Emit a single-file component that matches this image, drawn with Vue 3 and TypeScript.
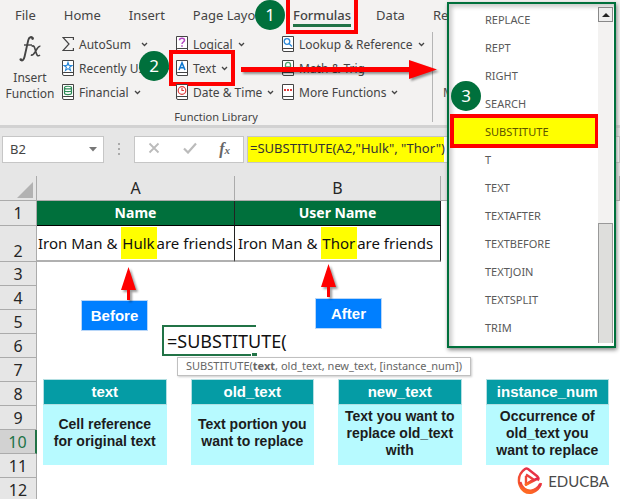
<script setup lang="ts">
import { ref } from 'vue'

interface Tab { label: string; active?: boolean }
interface Command { label: string; icon: string; menu: boolean; boxed?: boolean; wide?: boolean }
interface Card { title: string; lines: string[] }

const tabs: Tab[] = [
  { label: 'File' },
  { label: 'Home' },
  { label: 'Insert' },
  { label: 'Page Layout' },
  { label: 'Formulas', active: true },
  { label: 'Data' },
  { label: 'Review' },
]

const columns: Command[][] = [
  [
    { label: 'AutoSum', icon: 'sum', menu: true, wide: true },
    { label: 'Recently Used', icon: 'star', menu: true },
    { label: 'Financial', icon: 'coins', menu: true },
  ],
  [
    { label: 'Logical', icon: 'question', menu: true },
    { label: 'Text', icon: 'letter', menu: true, boxed: true },
    { label: 'Date & Time', icon: 'clock', menu: true },
  ],
  [
    { label: 'Lookup & Reference', icon: 'search', menu: true },
    { label: 'Math & Trig', icon: 'theta', menu: false },
    { label: 'More Functions', icon: 'dots', menu: true },
  ],
]

const functions: string[] = [
  'REPLACE', 'REPT', 'RIGHT', 'SEARCH', 'SUBSTITUTE', 'T',
  'TEXT', 'TEXTAFTER', 'TEXTBEFORE', 'TEXTJOIN', 'TEXTSPLIT', 'TRIM',
]

const emptyRows: number[] = [3, 4, 5, 6, 7, 8, 9, 10, 11, 12]

const cards: Card[] = [
  { title: 'text', lines: ['Cell reference', 'for original text'] },
  { title: 'old_text', lines: ['Text portion you', 'want to replace'] },
  { title: 'new_text', lines: ['Text you want to', 'replace old_text', 'with'] },
  { title: 'instance_num', lines: ['Occurrence of', 'old_text you', 'want to replace'] },
]

const formula = ref('=SUBSTITUTE(A2,"Hulk", "Thor")')
const selected = ref('SUBSTITUTE')
</script>

<template>
  <main class="page">
    <header class="ribbon">
      <nav class="tabs">
        <a v-for="t in tabs" :key="t.label" href="#" class="tab" :class="{ active: t.active }">{{ t.label }}</a>
      </nav>
      <div class="groups">
        <section class="group library">
          <div class="group-body">
            <button class="insert-fn" type="button">
              <svg class="fx-big" viewBox="0 0 24 28" aria-hidden="true">
                <path d="M14.800 3.200C13.800 1.300 11 1.800 10.200 5.400L6.600 21.500C6 24.600 4 26.600 2.800 24.800" fill="none" stroke="#444" stroke-width="1.900" />
                <circle cx="14.600" cy="3.600" r="1.300" fill="#444" /><circle cx="2.800" cy="24.600" r="1.300" fill="#444" />
                <path d="M6 10h8" stroke="#444" stroke-width="1.400" />
                <path d="M13.600 11.400c2.500-1.600 3 1 4 4.600s1.800 6.200 4.400 4M22.400 11.200c-2-.4-3.600 3-4.600 4.600s-2.400 5-5 4.200" fill="none" stroke="#444" stroke-width="1.600" />
              </svg>
              <span>Insert</span><span>Function</span>
            </button>
            <div v-for="(col, i) in columns" :key="i" class="commands">
              <button v-for="c in col" :key="c.label" type="button" class="command" :class="{ boxed: c.boxed }">
                <svg class="icon" viewBox="0 0 12 16" aria-hidden="true">
                  <path v-if="c.icon === 'sum'" d="M11.400 4V1.500H1L7 8L1 14.500H11.400V12" fill="none" stroke="#444" stroke-width="1.200" />
                  <g v-else fill="none">
                    <path d="M.500 .500H11.500V15.500H2Q.500 15.500 .500 14ZM.500 13.500Q.500 12.500 2 12.500H11.500" fill="#fff" stroke="#444" />
                    <path v-if="c.icon === 'star'" d="M6 2.400L7 5.500H10L7.600 7.300L8.500 10.400L6 8.600L3.500 10.400L4.400 7.300L2 5.500H5Z" stroke="#2b88d8" stroke-width="1.100" />
                    <path v-if="c.icon === 'coins'" d="M2.500 3.500C2.500 1.800 9.500 1.800 9.500 3.500V9.300C9.500 11 2.500 11 2.500 9.300ZM2.500 3.700C2.500 5.300 9.500 5.300 9.500 3.700M2.500 6.500C2.500 8 9.500 8 9.500 6.500" stroke="#2e8b57" stroke-width="1.200" />
                    <path v-if="c.icon === 'question'" d="M3.500 4.200C3.500 1.500 8.500 1.500 8.500 4.200C8.500 6 6 6 6 8M6 9.300V10.800" stroke="#b146c2" stroke-width="1.500" />
                    <path v-if="c.icon === 'letter'" d="M3 10L6 2.800L9 10M4.200 7.700H7.800" stroke="#0f78d0" stroke-width="1.600" />
                    <g v-if="c.icon === 'clock'" stroke="#e03c3c" stroke-width="1.200"><circle cx="6" cy="6.500" r="3.800" /><path d="M6 4V6.500H8" /></g>
                    <g v-if="c.icon === 'search'" stroke="#2b88d8" stroke-width="1.300"><circle cx="5" cy="5.500" r="2.800" /><path d="M7 7.500L10 10.500" /></g>
                    <path v-if="c.icon === 'theta'" d="M3.500 11V5C3.500 1.500 8.500 1.500 8.500 5V11M3.500 7H8.500" stroke="#4aa06c" stroke-width="1.300" />
                    <path v-if="c.icon === 'dots'" d="M2 6H4M5 6H7M8 6H10" stroke="#e03c3c" stroke-width="2" />
                  </g>
                </svg>
                <span>{{ c.label }}</span>
                <svg v-if="c.menu" class="chevron" :class="{ spaced: c.wide }" viewBox="0 0 7 5" aria-hidden="true">
                  <path d="M1 1L3.500 3.500L6 1" fill="none" stroke="#444" stroke-width="1.300" />
                </svg>
              </button>
            </div>
          </div>
          <h2 class="group-name">Function Library</h2>
        </section>
        <section class="group names">
          <button type="button" class="command">Manager</button>
        </section>
      </div>
    </header>

    <div class="formula-bar">
      <button class="name-box" type="button" aria-label="Name box">
        <span>B2</span>
        <svg width="8" height="5" viewBox="0 0 8 5" aria-hidden="true"><path d="M0 0H8L4 4.500Z" fill="#777" /></svg>
      </button>
      <svg class="grip" width="4" height="14" viewBox="0 0 4 14" aria-hidden="true"><path d="M1 1H3V3H1ZM1 6H3V8H1ZM1 11H3V13H1Z" fill="#aaa" /></svg>
      <div class="tools">
        <button type="button" aria-label="Cancel"><svg width="12" height="12" viewBox="0 0 12 12"><path d="M1.500 1.500L10.500 10.500M10.500 1.500L1.500 10.500" stroke="#bbb" stroke-width="1.800" /></svg></button>
        <button type="button" aria-label="Enter"><svg width="14" height="12" viewBox="0 0 14 12"><path d="M1 6.500L5 10.500L13 1.500" fill="none" stroke="#bbb" stroke-width="2.200" /></svg></button>
        <button type="button" class="fx-small" aria-label="Insert function">f<small>x</small></button>
      </div>
      <input v-model="formula" class="formula" type="text" aria-label="Formula">
    </div>

    <div class="sheet">
      <table>
        <colgroup><col class="c-num"><col class="c-a"><col class="c-b"><col></colgroup>
        <thead>
          <tr>
            <th class="corner"><svg width="16" height="16" viewBox="0 0 16 16" aria-hidden="true"><path d="M16 0V16H0Z" fill="#b2b2b2" /></svg></th>
            <th>A</th><th>B</th><th></th>
          </tr>
        </thead>
        <tbody>
          <tr class="titles"><th>1</th><td>Name</td><td>User Name</td><td></td></tr>
          <tr class="values">
            <th>2</th>
            <td>Iron Man &amp; <mark>Hulk</mark>are friends</td>
            <td>Iron Man &amp; <mark>Thor</mark>are friends</td>
            <td></td>
          </tr>
          <tr v-for="n in emptyRows" :key="n" :class="{ current: n === 10 }"><th>{{ n }}</th><td colspan="3"></td></tr>
        </tbody>
      </table>

      <div class="callout before">Before</div>
      <div class="callout after">After</div>
      <div class="editor">=SUBSTITUTE(</div>
      <div class="hint">SUBSTITUTE(<b>text</b>, old_text, new_text, [instance_num])</div>

      <div class="cards">
        <article v-for="card in cards" :key="card.title" class="card">
          <h3>{{ card.title }}</h3>
          <p><span v-for="line in card.lines" :key="line">{{ line }}</span></p>
        </article>
      </div>

      <div class="brand">
        <svg width="26" height="30" viewBox="0 0 26 30" aria-hidden="true">
          <defs><linearGradient id="flame" x1="0.800" y1="0" x2="0.300" y2="1"><stop offset="0" stop-color="#e0244f" /><stop offset="1" stop-color="#ff6a22" /></linearGradient></defs>
          <path d="M9 10V18.500L16.500 13.500L9 8.500M20.500 14.500Q22.500 12.500 20.500 10.500L11 3Q9.500 2 8 3C3 6.500 1.200 12 2.200 17.500C4 24.500 9.500 28 15 26.500C20 25 23 21 24 17" fill="none" stroke="url(#flame)" stroke-width="2.400" stroke-linejoin="round" />
          <path d="M9 18.500L20.500 12.500" stroke="url(#flame)" stroke-width="2.800" stroke-linecap="round" />
          <path d="M3 16C4.500 22 9 25.500 14 25C18 24.600 21.500 22 23.500 18" fill="none" stroke="url(#flame)" stroke-width="3" />
        </svg>
        <span>EDUCBA</span>
      </div>
    </div>

    <aside class="panel">
      <ul>
        <li v-for="f in functions" :key="f">
          <button type="button" :class="{ picked: f === selected }" @click="selected = f">{{ f }}</button>
        </li>
      </ul>
      <div class="scroll">
        <button type="button" aria-label="Scroll up"><svg width="8" height="4" viewBox="0 0 8 4"><path d="M0 4H8L4 0Z" fill="#222" /></svg></button>
        <div class="thumb"></div>
      </div>
    </aside>

    <svg class="arrows" width="450" height="310" viewBox="0 0 450 310" aria-hidden="true">
      <g fill="#f00">
        <path d="M241 67H409V60L437 69.500L409 79V72H241Z" />
        <path d="M128.500 267L136 290H130V300H127V290H121Z" />
        <path d="M328.500 264L336 287H330V297H327V287H321Z" />
      </g>
    </svg>
    <span class="step one">1</span>
    <span class="step two">2</span>
    <span class="step three">3</span>
  </main>
</template>

<style>
body { margin: 0; }
</style>

<style scoped>
* { box-sizing: border-box; }
button { border: 0; padding: 0; background: none; font: inherit; color: inherit; }
h2, h3, p, ul { margin: 0; padding: 0; font-weight: 400; }

.page {
  position: relative;
  display: flex;
  flex-direction: column;
  height: 100vh;
  overflow: hidden;
  background: #fff;
  font-family: "Noto Sans", "Open Sans", sans-serif;
  color: #444;
}

/* Ribbon */
.ribbon { background: #f3f2f1; border-bottom: 3px solid #d2d2d2; font-size: 12px; white-space: nowrap; }
.tabs { display: flex; gap: 28px; height: 32px; padding-left: 15px; font-size: 13px; }
.tab { height: 27px; line-height: 30px; color: #444; text-decoration: none; }
.tab.active { margin: 0 -3px; font-weight: 500; border-bottom: 3px solid #217346; outline: 4px solid #f00; outline-offset: 3px; }
.groups { display: flex; height: 93px; }
.group.library { flex: 0 0 433px; height: 90px; border-right: 1px solid #b5b5b5; }
.group-body { display: flex; height: 75px; }
.insert-fn { display: flex; flex-direction: column; align-items: center; width: 62px; line-height: 16px; padding: 3px 2px 0 0; }
.fx-big { width: 24px; height: 28px; margin-bottom: 7px; }
.commands { display: flex; flex-direction: column; width: 114px; }
.commands:nth-child(3) { width: 106px; }
.commands:nth-child(4) { width: 140px; }
.command { display: flex; align-items: center; gap: 5px; height: 24px; }
.command.boxed { align-self: flex-start; height: 22px; margin: 1px 0; outline: 4px solid #f00; outline-offset: 3px; }
.icon { flex: none; width: 12px; height: 16px; }
.chevron { flex: none; width: 7px; height: 5px; }
.chevron.spaced { margin-left: 5px; }
.group-name { font-size: 11px; line-height: 20px; text-align: center; }
.names { padding: 48px 0 0 10px; }

/* Formula bar */
.formula-bar { display: flex; align-items: center; height: 48px; padding: 0 0 6px 2px; background: #e6e6e6; font-size: 13px; }
.name-box { display: flex; align-items: center; justify-content: space-between; width: 102px; height: 27px; padding: 0 6px 0 7px; background: #fff; border: 1px solid #c6c6c6; }
.grip { margin: 0 13px; }
.tools { display: flex; align-items: center; justify-content: space-between; width: 110px; height: 27px; padding: 0 13px; background: #fff; border: 1px solid #c6c6c6; }
.fx-small { font: italic bold 16px "Liberation Serif", serif; color: #666; }
.fx-small small { font-size: 11px; }
.formula { flex: 1; min-width: 0; height: 27px; margin-left: 3px; padding: 0 2px 2px; border: 1px solid #c6c6c6; background: linear-gradient(#ff0, #ff0) 0 0 / 196px 100% no-repeat #fff; font: 13px "Noto Sans", sans-serif; color: #333; }

/* Sheet */
.sheet { position: relative; flex: 1; min-height: 0; }
table { width: 100%; border-collapse: separate; border-spacing: 0; table-layout: fixed; }
.c-num { width: 37px; }
.c-a { width: 198px; }
.c-b { width: 206px; }
th, td { padding: 0; height: 24px; white-space: nowrap; }
th { background: #e6e6e6; border-right: 1px solid #ababab; border-bottom: 1px solid #ababab; font-weight: 400; font-size: 16px; line-height: 20px; color: #262626; }
thead th { height: 25px; }
.corner { text-align: right; }
.corner svg { display: block; margin: 3px 3px 0 auto; }
.titles th { height: 25px; }
.titles td { background: #00703c; color: #fff; font-weight: 700; font-size: 14px; line-height: 20px; text-align: center; border-bottom: 1px solid #000; border-right: 1px solid #222; }
.values th, .values td { height: 36px; }
.values th { vertical-align: bottom; }
.values td { padding-left: 1px; font-size: 15px; color: #111; border-right: 1px solid #222; border-bottom: 2px solid #b0b0b0; }
.values td + td { padding-left: 3px; }
.titles td:last-child, .values td:last-child { background: #fff; border: 0; }
mark { display: inline-block; height: 32px; padding: 0 2px 0 1px; line-height: 32px; background: #ff0; color: inherit; }
.current th { background: #d2d2d2; color: #217346; border-right: 2px solid #217346; }

/* Notes placed over the cells */
.callout { position: absolute; width: 67px; height: 31px; background: #007fff; border: 1px solid #b8d6f8; color: #fff; font: bold 15px/29px "Liberation Sans", sans-serif; text-align: center; }
.before { left: 81px; top: 124px; }
.after { left: 315px; top: 122px; }
.editor { position: absolute; left: 162px; top: 149px; width: 140px; height: 31px; padding-left: 3px; border-left: 2px solid #217346; background: linear-gradient(#217346, #217346) 0 0 / 92px 2px no-repeat, linear-gradient(#217346, #217346) 0 100% / 87px 2px no-repeat, linear-gradient(#217346, #217346) 88px 100% / 5px 3px no-repeat; font-size: 18px; line-height: 32px; color: #111; }
.hint { position: absolute; left: 177px; top: 181px; padding: 0 8px; height: 19px; border: 1px solid #c0c0c0; background: #fff; box-shadow: 1px 1px 2px #ccc; font-size: 11px; line-height: 16px; color: #666; white-space: nowrap; }
.cards { position: absolute; left: 43px; right: 11px; top: 203px; display: grid; grid-template-columns: repeat(4, 1fr); gap: 24px; text-align: center; font: bold 15px/17px "Liberation Sans", sans-serif; }
.card { display: flex; flex-direction: column; height: 86px; background: #b7faff; }
.card h3 { height: 26px; background: #059ca5; border: 1px solid #b3dfe2; font: inherit; line-height: 24px; color: #fff; }
.card p { flex: 1; display: flex; flex-direction: column; justify-content: center; padding-bottom: 4px; font: inherit; font-size: 14px; color: #1c1c1c; white-space: nowrap; }
.brand { position: absolute; right: 11px; bottom: 3px; display: flex; align-items: center; gap: 5px; font: 15px "Lato", sans-serif; color: #4a4a4a; }

/* Function list */
.panel { position: absolute; left: 447px; right: 4px; top: 2px; display: flex; height: 346px; padding: 2px 1px 3px; border: 2px solid #00703c; background: #fff; box-shadow: 1px 2px 4px #888, inset 3px 3px 4px #ccc; }
.panel ul { flex: 1; list-style: none; }
.panel li { height: 28px; }
.panel li button { display: block; width: 100%; height: 26px; padding: 0 3px 0 35px; text-align: left; font-size: 11px; color: #5a5a5a; }
.panel li .picked { width: auto; min-width: 141px; margin-left: 4px; padding-left: 31px; background: #ff0; outline: 4px solid #f00; color: #5c5300; }
.scroll { display: flex; flex-direction: column; justify-content: space-between; width: 15px; margin-top: 1px; background: #f3f2f1; }
.scroll button { display: flex; align-items: center; justify-content: center; height: 15px; border: 1px solid #888; background: #eee; }
.thumb { height: 120px; border: 1px solid #999; border-bottom: 0; background: #dededc; }

.arrows { position: absolute; left: 0; top: 0; filter: drop-shadow(2px 2px 1px rgba(0, 0, 0, .4)); pointer-events: none; }
.step { position: absolute; width: 30px; height: 30px; border-radius: 50%; background: #00703c; color: #fff; font-size: 17px; line-height: 29px; text-align: center; }
.one { left: 255px; top: 0; }
.two { left: 139px; top: 51px; }
.three { left: 451px; top: 81px; }
</style>
